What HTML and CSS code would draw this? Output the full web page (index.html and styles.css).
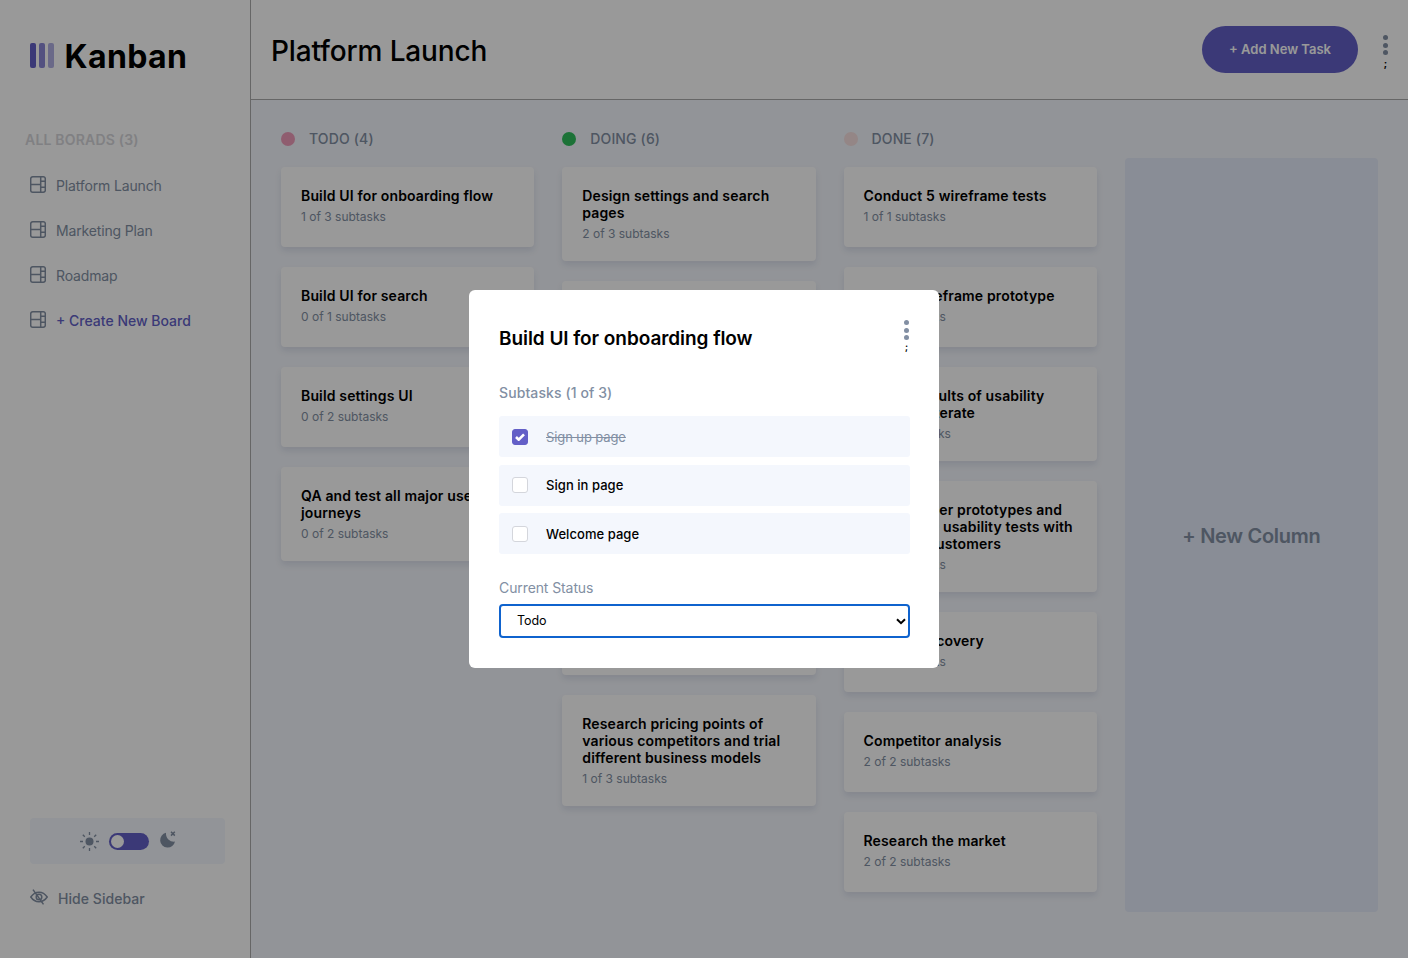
FILE: index.html
```html
<!DOCTYPE html>
<html lang="en">
<head>
<meta charset="utf-8">
<title>Kanban</title>
<link rel="stylesheet" href="styles.css">
</head>
<body>
<div class="app">
  <aside class="sidebar">
    <div class="logo">
      <svg class="logo-mark" width="25" height="25" viewBox="0 0 25 25"><rect width="6" height="25" rx="2" fill="#635fc7"/><rect x="9" width="6" height="25" rx="2" fill="#635fc7" fill-opacity=".75"/><rect x="18" width="6" height="25" rx="2" fill="#635fc7" fill-opacity=".5"/></svg>
      <span class="logo-text">Kanban</span>
    </div>
    <h2 class="boards-title">ALL BORADS (3)</h2>
    <nav class="boards">
      <a class="board-link"><svg class="board-icon" width="16" height="17" viewBox="0 0 16 17"><path d="M2.700.8h10.600a2 2 0 0 1 2 2v11.400a2 2 0 0 1-2 2H2.700a2 2 0 0 1-2-2V2.800a2 2 0 0 1 2-2zM.7 8.500h10M10.700.8v15.400M10.700 5.300h4.600M10.700 11.300h4.600"/></svg>Platform Launch</a>
      <a class="board-link"><svg class="board-icon" width="16" height="17" viewBox="0 0 16 17"><path d="M2.700.8h10.600a2 2 0 0 1 2 2v11.400a2 2 0 0 1-2 2H2.700a2 2 0 0 1-2-2V2.800a2 2 0 0 1 2-2zM.7 8.500h10M10.700.8v15.400M10.700 5.300h4.600M10.700 11.300h4.600"/></svg>Marketing Plan</a>
      <a class="board-link"><svg class="board-icon" width="16" height="17" viewBox="0 0 16 17"><path d="M2.700.8h10.600a2 2 0 0 1 2 2v11.400a2 2 0 0 1-2 2H2.700a2 2 0 0 1-2-2V2.800a2 2 0 0 1 2-2zM.7 8.500h10M10.700.8v15.400M10.700 5.300h4.600M10.700 11.300h4.600"/></svg>Roadmap</a>
      <a class="board-link board-link-new"><svg class="board-icon" width="16" height="17" viewBox="0 0 16 17"><path d="M2.700.8h10.600a2 2 0 0 1 2 2v11.400a2 2 0 0 1-2 2H2.700a2 2 0 0 1-2-2V2.800a2 2 0 0 1 2-2zM.7 8.500h10M10.700.8v15.400M10.700 5.300h4.600M10.700 11.300h4.600"/></svg>+ Create New Board</a>
    </nav>
    <div class="sidebar-foot">
      <div class="theme">
        <svg width="19" height="19" viewBox="0 0 19 19" class="sun"><circle cx="9.500" cy="9.500" r="4"/><path d="M9.500 0v3M9.500 16v3M0 9.500h3M16 9.500h3M2.800 2.800l2 2M14.200 14.200l2 2M2.800 16.200l2-2M14.200 4.800l2-2"/></svg>
        <span class="switch"><span class="knob"></span></span>
        <svg width="17" height="17" viewBox="0 0 17 17" class="moon"><path d="M7 1.800A7.500 7.500 0 1 0 16 10.600 8 8 0 0 1 7 1.800z"/><path class="moon-x" d="M12 .8l3.800 3.800M15.800 .8L12 4.600"/></svg>
      </div>
      <a class="hide-link"><svg width="18" height="16" viewBox="0 0 18 16" class="eye"><path d="M.8 8C3 4.800 5.800 3.200 9 3.200S15 4.800 17.200 8C15 11.200 12.200 12.800 9 12.800S3 11.200 .8 8z"/><circle cx="9" cy="8" r="2.800"/><path d="M3 .6L13.500 15.400"/></svg>Hide Sidebar</a>
    </div>
  </aside>

  <main class="main">
    <header class="topbar">
      <h1 class="board-name">Platform Launch</h1>
      <button class="add-task">+ Add New Task</button>
      <div class="more more-top"><span class="dots"><i></i><i></i><i></i></span><span class="more-mark">;</span></div>
    </header>
    <section class="columns">
      <div class="column">
        <h3 class="col-head"><i class="dot dot-todo"></i>TODO (4)</h3>
        <article class="card"><h4>Build UI for onboarding flow</h4><p>1 of 3 subtasks</p></article>
        <article class="card"><h4>Build UI for search</h4><p>0 of 1 subtasks</p></article>
        <article class="card"><h4>Build settings UI</h4><p>0 of 2 subtasks</p></article>
        <article class="card"><h4>QA and test all major user journeys</h4><p>0 of 2 subtasks</p></article>
      </div>
      <div class="column">
        <h3 class="col-head"><i class="dot dot-doing"></i>DOING (6)</h3>
        <article class="card"><h4>Design settings and search pages</h4><p>2 of 3 subtasks</p></article>
        <article class="card"><h4>Add account management</h4><p>1 of 3 subtasks</p></article>
        <article class="card"><h4>Design onboarding flow</h4><p>1 of 3 subtasks</p></article>
        <article class="card"><h4>Add search endpoints</h4><p>1 of 2 subtasks</p></article>
        <article class="card"><h4>Add authentication endpoints and session storage</h4><p>1 of 2 subtasks</p></article>
        <article class="card"><h4>Research pricing points of various competitors and trial different business models</h4><p>1 of 3 subtasks</p></article>
      </div>
      <div class="column">
        <h3 class="col-head"><i class="dot dot-done"></i>DONE (7)</h3>
        <article class="card"><h4>Conduct 5 wireframe tests</h4><p>1 of 1 subtasks</p></article>
        <article class="card"><h4>Create wireframe prototype</h4><p>1 of 1 subtasks</p></article>
        <article class="card"><h4>Review results of usability tests and iterate</h4><p>3 of 3 subtasks</p></article>
        <article class="card"><h4>Create paper prototypes and conduct 10 usability tests with potential customers</h4><p>1 of 1 subtasks</p></article>
        <article class="card"><h4>Market discovery</h4><p>1 of 1 subtasks</p></article>
        <article class="card"><h4>Competitor analysis</h4><p>2 of 2 subtasks</p></article>
        <article class="card"><h4>Research the market</h4><p>2 of 2 subtasks</p></article>
      </div>
      <div class="new-column">+ New Column</div>
    </section>
  </main>
</div>

<div class="overlay">
  <div class="modal">
    <div class="modal-head">
      <h2>Build UI for onboarding flow</h2>
      <div class="more more-modal"><span class="dots"><i></i><i></i><i></i></span><span class="more-mark">;</span></div>
    </div>
    <div class="modal-label">Subtasks (1 of 3)</div>
    <label class="subtask subtask-done"><span class="check check-on"><svg width="10" height="8" viewBox="0 0 10 8"><path d="M1 4l2.700 2.700L9 1.300"/></svg></span><span class="subtask-text">Sign up page</span></label>
    <label class="subtask"><span class="check"></span><span class="subtask-text">Sign in page</span></label>
    <label class="subtask"><span class="check"></span><span class="subtask-text">Welcome page</span></label>
    <div class="status-label">Current Status</div>
    <div class="status-select"><span>Todo</span><svg width="10" height="7" viewBox="0 0 10 7"><path d="M1 1.200l4 4 4-4"/></svg></div>
  </div>
</div>
</body>
</html>
```
FILE: styles.css
```css
* { box-sizing: border-box; }
html, body { margin: 0; height: 100%; }
body { font-family: Inter, "Liberation Sans", sans-serif; color: #000; background: #f4f7fd; overflow: hidden; }
h1, h2, h3, h4, p { margin: 0; }

.app { display: flex; height: 958px; }

.sidebar { width: 251px; flex: none; background: #fff; border-right: 1px solid #aaa; padding: 0 25px 0 30px; display: flex; flex-direction: column; }
.logo { display: flex; align-items: center; gap: 10px; height: 25px; margin-top: 43px; font-size: 32px; font-weight: 700; letter-spacing: .4px; }
.logo-mark { flex: none; }
.logo-text { margin-top: 1px; margin-left: -.5px; }
.boards-title { margin: 63px 0 0 -5px; font-size: 14px; line-height: 17px; font-weight: 600; color: #d6d6da; letter-spacing: .2px; }
.boards { display: flex; flex-direction: column; margin-top: 27px; gap: 25px; }
.board-link { display: flex; align-items: center; gap: 10px; height: 20px; font-size: 14px; color: #828fa3; letter-spacing: -.15px; }
.board-icon { flex: none; fill: none; stroke: #828fa3; stroke-width: 1.500; margin-top: -1px; }
.board-link-new { color: #635fc7; font-weight: 500; letter-spacing: 0; }
.sidebar-foot { margin-top: auto; padding-bottom: 50px; }
.theme { height: 46px; background: #f4f7fd; border-radius: 4px; display: flex; align-items: center; justify-content: center; gap: 10px; }
.sun { fill: #828fa3; stroke: #828fa3; stroke-width: 1.300; }
.sun circle { stroke: none; }
.moon { fill: #828fa3; margin-top: -4px; }
.moon-x { fill: none; stroke: #828fa3; stroke-width: 1.500; }
.switch { width: 40px; height: 17px; background: #635fc7; border-radius: 9px; padding: 2px; display: flex; }
.knob { width: 13px; height: 13px; border-radius: 50%; background: #fff; }
.hide-link { display: flex; align-items: center; gap: 10px; margin-top: 24px; height: 20px; font-size: 14px; font-weight: 500; color: #828fa3; letter-spacing: .05px; }
.eye { flex: none; fill: none; stroke: #828fa3; stroke-width: 1.500; margin-top: -3px; }

.main { flex: 1; min-width: 0; display: flex; flex-direction: column; }
.topbar { height: 100px; flex: none; background: #fff; border-bottom: 1px solid #aaa; display: flex; align-items: center; padding: 0 20px 0 20px; }
.board-name { font-size: 28px; font-weight: 500; flex: 1; margin-top: 3px; letter-spacing: -.15px; }
.add-task { width: 156px; height: 47px; border: 0; border-radius: 24px; background: #635fc7; color: #fff; font: 600 13px Inter, sans-serif; letter-spacing: 0; margin-top: -1px; }
.more { display: flex; flex-direction: column; align-items: center; }
.more-top { margin-left: 25px; width: 5px; margin-top: 4px; }
.dots { display: flex; flex-direction: column; gap: 2.600px; }
.dots i { display: block; width: 5px; height: 5px; border-radius: 50%; background: #828fa3; }
.more-mark { font-size: 10px; line-height: 10px; font-weight: 700; margin-top: 3px; }

.columns { flex: 1; display: grid; grid-template-columns: repeat(4, 1fr); gap: 28px; padding: 30px 30px 46px 30px; align-items: start; }
.column { display: flex; flex-direction: column; gap: 20px; }
.col-head { display: flex; align-items: center; gap: 14px; height: 17px; font-size: 14px; line-height: 17px; font-weight: 500; color: #828fa3; letter-spacing: .15px; }
.dot { width: 14px; height: 14px; border-radius: 50%; flex: none; }
.dot-todo { background: #ee9cba; }
.dot-doing { background: #2fbf5d; }
.dot-done { background: #f7dfdf; }
.card { background: #fff; border-radius: 4px; padding: 20px 20px 19px; min-height: 80px; box-shadow: 0 4px 6px rgba(54,78,126,.12); }
.card h4 { font-size: 14px; line-height: 17px; font-weight: 600; letter-spacing: .15px; }
.card p { margin-top: 4px; font-size: 12px; line-height: 17px; color: #828fa3; letter-spacing: 0; }
.new-column { align-self: stretch; margin-top: 28px; padding-top: 2px; display: flex; align-items: center; justify-content: center; background: #e4ebfa; border-radius: 4px; font-size: 20px; font-weight: 600; color: #828fa3; letter-spacing: -.3px; }

.overlay { position: fixed; inset: 0; background: rgba(0,0,0,.4); display: flex; align-items: center; justify-content: center; }
.modal { width: 470px; height: 378px; background: #fff; border-radius: 6px; padding: 30px 29px 30px 30px; display: flex; flex-direction: column; }
.modal-head { display: flex; justify-content: space-between; align-items: flex-start; }
.modal-head h2 { font-size: 19px; line-height: 36px; font-weight: 600; letter-spacing: -.06px; padding-top: 1px; }
.more-modal { width: 5px; margin-right: 1px; }
.more-modal .more-mark { font-size: 9px; margin-top: 2px; }
.modal-label { margin-top: 27px; margin-bottom: 15px; font-size: 14px; line-height: 17px; font-weight: 500; color: #828fa3; letter-spacing: .1px; }
.subtask { height: 41px; background: #f4f7fd; border-radius: 3px; display: flex; align-items: center; padding-left: 13px; gap: 18px; font-size: 13px; font-weight: 500; margin-bottom: 7.500px; letter-spacing: .05px; }
.check { width: 16px; height: 16px; background: #fff; border: 1px solid #d4d6dc; border-radius: 3px; display: flex; align-items: center; justify-content: center; flex: none; }
.check-on { background: #635fc7; border-color: #635fc7; }
.check-on path { fill: none; stroke: #fff; stroke-width: 2.600; }
.subtask-done .subtask-text { color: #828fa3; font-weight: 400; text-decoration: line-through; letter-spacing: -.1px; }
.status-label { margin-top: 17px; font-size: 14px; line-height: 17px; color: #828fa3; letter-spacing: -.1px; }
.status-select { margin-top: 8.500px; height: 34px; border: 2px solid #0f63ce; border-radius: 4px; display: flex; align-items: center; justify-content: space-between; padding: 0 2px 2px 16px; font-size: 12.500px; letter-spacing: -.1px; }
.status-select svg { fill: none; stroke: #000; stroke-width: 2; margin-top: 2px; }
```
